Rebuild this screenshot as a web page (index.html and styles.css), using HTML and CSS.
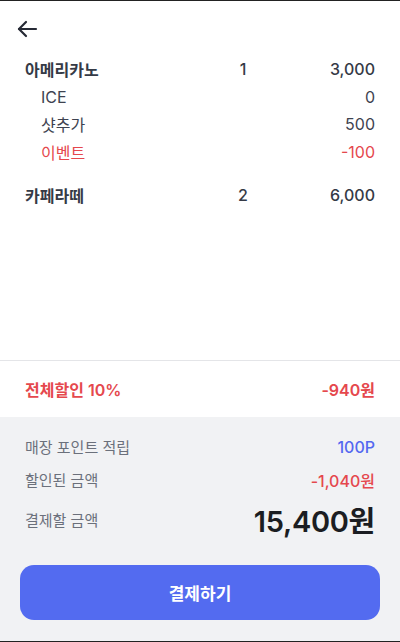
FILE: index.html
```html
<!DOCTYPE html>
<html>
<head>
    <title>주문 확인</title>
    <link rel="stylesheet" href="styles.css">
</head>
<body>
    <div class="screen">
        <div class="top-bar">
            <button class="back-btn" aria-label="뒤로">
                <svg width="24" height="24" viewBox="0 0 24 24" fill="none" stroke="#262a35" stroke-width="2.2" stroke-linecap="round" stroke-linejoin="round">
                    <path d="M21 12H4"/>
                    <path d="M11 5l-7 7 7 7"/>
                </svg>
            </button>
        </div>

        <div class="order-list">
            <div class="item">
                <div class="row main-row">
                    <span class="name">아메리카노</span>
                    <span class="qty">1</span>
                    <span class="price">3,000</span>
                </div>
                <div class="row option-row">
                    <span class="name">ICE</span>
                    <span class="price">0</span>
                </div>
                <div class="row option-row">
                    <span class="name">샷추가</span>
                    <span class="price">500</span>
                </div>
                <div class="row option-row red">
                    <span class="name">이벤트</span>
                    <span class="price">-100</span>
                </div>
            </div>
            <div class="item">
                <div class="row main-row">
                    <span class="name">카페라떼</span>
                    <span class="qty">2</span>
                    <span class="price">6,000</span>
                </div>
            </div>
        </div>

        <div class="discount-row">
            <span>전체할인 10%</span>
            <span>-940원</span>
        </div>

        <div class="summary">
            <div class="sum-row">
                <span class="label">매장 포인트 적립</span>
                <span class="points">100P</span>
            </div>
            <div class="sum-row">
                <span class="label">할인된 금액</span>
                <span class="discounted">-1,040원</span>
            </div>
            <div class="sum-row total-row">
                <span class="label">결제할 금액</span>
                <span class="total">15,400원</span>
            </div>
            <button class="pay-btn">결제하기</button>
        </div>
    </div>
</body>
</html>
```

FILE: styles.css
```css
* { box-sizing: border-box; }
body {
    margin: 0;
    font-family: Inter, "Noto Sans CJK KR", sans-serif;
    color: #2f3440;
    background: #fff;
}
.screen {
    height: 642px;
    display: flex;
    flex-direction: column;
    border-top: 1px solid #222;
    border-bottom: 1px solid #222;
}
.top-bar {
    height: 54px;
    padding: 15px 0 0 14px;
}
.back-btn {
    background: none;
    border: none;
    padding: 0;
    width: 26px;
    height: 26px;
    cursor: pointer;
    display: flex;
    align-items: center;
    justify-content: center;
}
.order-list {
    flex: 1;
    padding: 0 25px;
}
.item { margin-bottom: 15.5px; }
.row {
    display: flex;
    align-items: center;
}
.row .name { flex: 1; }
.row .price { text-align: right; }
.main-row {
    height: 28px;
    font-size: 16px;
    font-weight: 500;
    color: #353a46;
}
.main-row .name { font-weight: 600; }
.main-row .qty {
    width: 20px;
    text-align: center;
    margin-right: 42px;
}
.main-row .price { width: 80px; }
.option-row {
    height: 27.5px;
    font-size: 16px;
    padding-left: 16px;
    color: #3e4350;
}
.option-row.red { color: #e5484d; }
.discount-row {
    border-top: 1px solid #e4e5e8;
    height: 57px;
    padding: 0 25px;
    display: flex;
    align-items: center;
    justify-content: space-between;
    color: #e5484d;
    font-weight: 600;
    font-size: 16px;
}
.summary {
    background: #f1f2f4;
    padding: 13px 20px 21px;
}
.sum-row {
    display: flex;
    justify-content: space-between;
    align-items: center;
    padding: 0 5px;
    height: 33px;
    font-size: 15px;
}
.label { color: #6b707b; }
.points { color: #5468f0; font-weight: 500; font-size: 16px; }
.discounted { color: #e5484d; font-weight: 500; font-size: 16px; }
.total-row { height: 46px; }
.total {
    font-size: 29px;
    font-weight: 600;
    color: #1b1d22;
    letter-spacing: -0.3px;
}
.pay-btn {
    display: block;
    width: 100%;
    height: 55px;
    margin-top: 23px;
    border: none;
    border-radius: 14px;
    background: #536bf0;
    color: #fff;
    font-family: inherit;
    font-size: 17px;
    font-weight: 600;
    cursor: pointer;
}
```
